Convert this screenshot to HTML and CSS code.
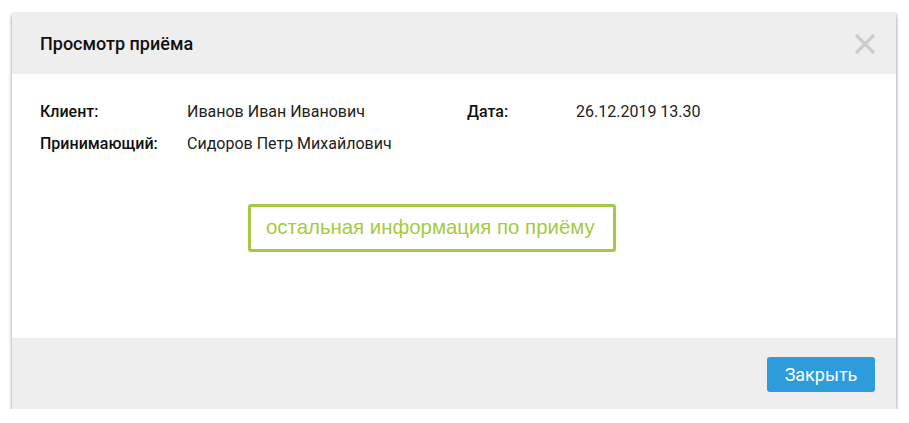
FILE: index.html
```html
<!DOCTYPE html>
<html lang="ru">
<head>
<meta charset="utf-8">
<title>Просмотр приёма</title>
<link rel="stylesheet" href="styles.css">
</head>
<body>
<div class="modal">
  <div class="modal-header">
    <h1 class="modal-title">Просмотр приёма</h1>
    <button class="close" aria-label="Закрыть">
      <svg width="22" height="22" viewBox="0 0 22 22"><path d="M2 2 L20 20 M20 2 L2 20" stroke="#cccccc" stroke-width="3.2" fill="none"/></svg>
    </button>
  </div>
  <div class="modal-body">
    <div class="info">
      <div class="label">Клиент:</div>
      <div class="value">Иванов Иван Иванович</div>
      <div class="label">Дата:</div>
      <div class="value">26.12.2019 13.30</div>
      <div class="label">Принимающий:</div>
      <div class="value">Сидоров Петр Михайлович</div>
    </div>
    <div class="extra">остальная информация по приёму</div>
  </div>
  <div class="modal-footer">
    <button class="btn">Закрыть</button>
  </div>
</div>
</body>
</html>
```
FILE: styles.css
```css
html, body {
  margin: 0;
  padding: 0;
  background: #ffffff;
}
body {
  padding: 13px 13px 0 12px;
  font-family: Roboto, "Liberation Sans", sans-serif;
  color: #1a1a1a;
}
.modal {
  width: 884px;
  background: #fff;
  box-shadow: 0 3px 4px rgba(0,0,0,0.32), 1px 0 2px rgba(0,0,0,0.1), -1px 0 2px rgba(0,0,0,0.08);
}
.modal-header {
  height: 61px;
  background: #eeeeee;
  display: flex;
  align-items: center;
  justify-content: space-between;
  padding: 0 20px 0 28px;
  box-sizing: border-box;
}
.modal-title {
  margin: 0;
  font-size: 18px;
  font-weight: 500;
  color: #111;
}
.close {
  border: 0;
  background: none;
  padding: 0;
  width: 22px;
  height: 22px;
  display: flex;
  margin-top: 1px;
}
.modal-body {
  height: 264px;
  padding: 28px 28px 0 28px;
  box-sizing: border-box;
}
.info {
  display: grid;
  grid-template-columns: 147px 280px 109px auto;
  row-gap: 12px;
  font-size: 16px;
  line-height: 20px;
}
.label {
  font-weight: 500;
  color: #111;
}
.value {
  color: #222;
}
.extra {
  margin: 50px 0 0 208px;
  width: 368px;
  height: 48px;
  box-sizing: border-box;
  border: 3px solid #a6c944;
  border-radius: 3px;
  color: #a6c944;
  font-family: "Liberation Sans", Arial, sans-serif;
  font-size: 20.4px;
  display: flex;
  align-items: center;
  padding-left: 15px;
  padding-bottom: 1px;
}
.modal-footer {
  height: 71px;
  background: #eeeeee;
  display: flex;
  align-items: center;
  justify-content: flex-end;
  padding-right: 21px;
}
.btn {
  width: 108px;
  height: 35px;
  border: 0;
  border-radius: 3px;
  background: #2d9cdb;
  color: #fff;
  font-family: Roboto, sans-serif;
  font-size: 18px;
  margin-top: 1px;
}
```
